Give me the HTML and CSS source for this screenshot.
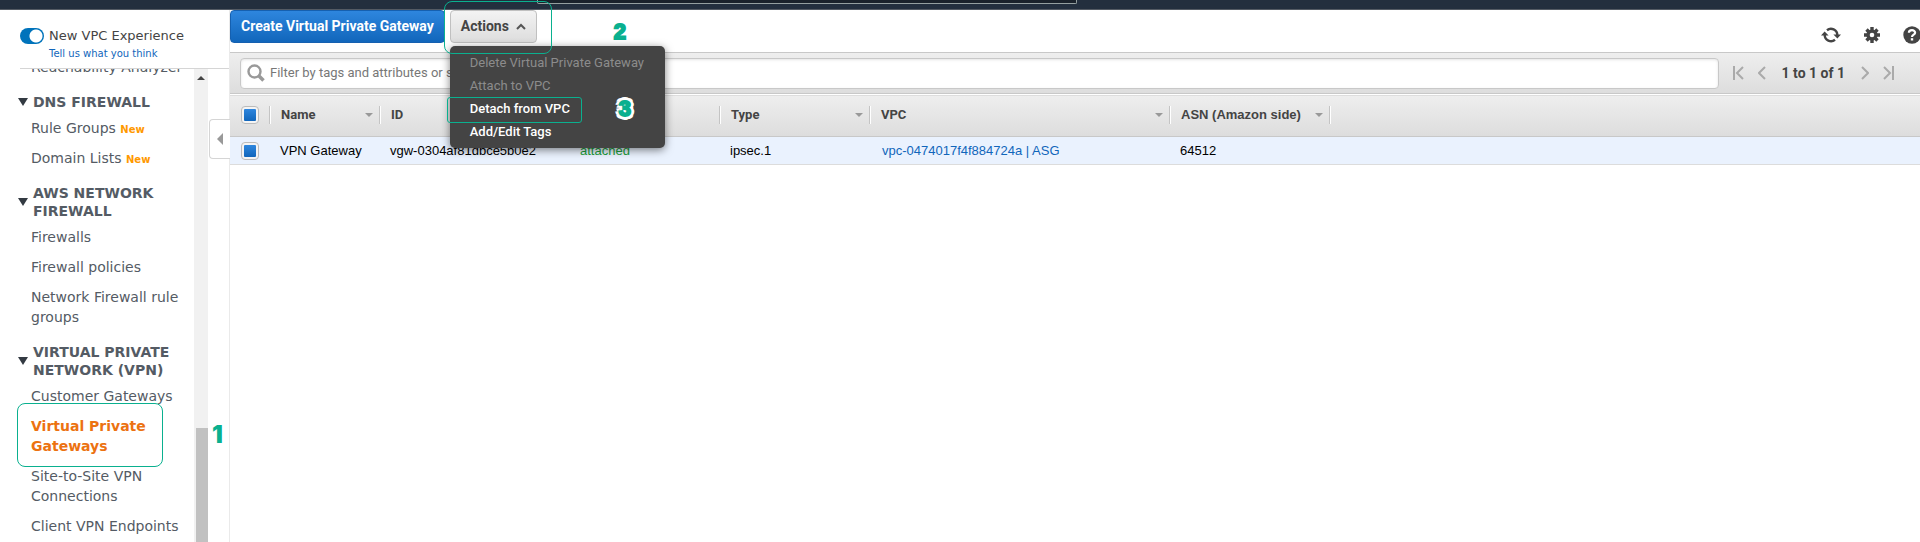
FILE: index.html
```html
<!DOCTYPE html>
<html lang="en">
<head>
<meta charset="utf-8">
<title>Virtual Private Gateways | VPC Console</title>
<link rel="stylesheet" href="styles.css">
</head>
<body>
<header class="topbar"><div class="topbar-search"></div></header>
<div class="layout">
  <aside class="sidebar">
    <div class="experience">
      <input class="switch" type="checkbox" id="exp" checked>
      <div class="experience-text">
        <label for="exp">New VPC Experience</label>
        <a href="#">Tell us what you think</a>
      </div>
    </div>
    <div class="nav-area">
      <nav class="nav">
        <ul class="nav-list">
          <li><a href="#">Reachability Analyzer</a></li>
        </ul>
        <h2 class="nav-heading"><span class="caret"></span>DNS FIREWALL</h2>
        <ul class="nav-list">
          <li><a href="#">Rule Groups <b class="new">New</b></a></li>
          <li><a href="#">Domain Lists <b class="new">New</b></a></li>
        </ul>
        <h2 class="nav-heading"><span class="caret"></span>AWS NETWORK FIREWALL</h2>
        <ul class="nav-list">
          <li><a href="#">Firewalls</a></li>
          <li><a href="#">Firewall policies</a></li>
          <li><a href="#">Network Firewall rule groups</a></li>
        </ul>
        <h2 class="nav-heading"><span class="caret"></span>VIRTUAL PRIVATE NETWORK (VPN)</h2>
        <ul class="nav-list">
          <li><a href="#">Customer Gateways</a></li>
          <li class="current"><a href="#">Virtual Private Gateways</a><span class="mark mark-nav"></span></li>
          <li><a href="#">Site-to-Site VPN Connections</a></li>
          <li><a href="#">Client VPN Endpoints</a></li>
        </ul>
      </nav>
      <div class="scrollbar"><span class="scroll-up"></span><span class="scroll-thumb"></span></div>
    </div>
    <button class="collapse" type="button" aria-label="Collapse sidebar"><span></span></button>
    <span class="step step-one">1</span>
  </aside>
  <main class="main">
    <div class="toolbar">
      <button class="btn btn-primary" type="button">Create Virtual Private Gateway</button>
      <div class="actions">
        <button class="btn btn-plain" type="button">Actions
          <svg width="10" height="7" viewBox="0 0 10 7"><path d="M1 6 5 2 9 6" fill="none" stroke="#555" stroke-width="2"/></svg>
        </button>
        <div class="menu">
          <button type="button" disabled>Delete Virtual Private Gateway</button>
          <button type="button" disabled>Attach to VPC</button>
          <button type="button">Detach from VPC</button>
          <button type="button">Add/Edit Tags</button>
          <span class="mark mark-item"></span>
          <span class="step step-three">3</span>
        </div>
        <span class="mark mark-actions"></span>
        <span class="step step-two">2</span>
      </div>
      <div class="tools">
        <button type="button" aria-label="Refresh"><svg width="20" height="16" viewBox="0 0 20 16"><g fill="none" stroke="#444" stroke-width="2.4"><path d="M6 3.2A6.3 6.3 0 0 1 16.3 8"/><path d="M14 12.8A6.3 6.3 0 0 1 3.700 8"/></g><path d="M12.400 7.500H20L16.400 11.500ZM0 8.500H7.600L3.600 4.500Z" fill="#444"/></svg></button>
        <button type="button" aria-label="Settings"><svg width="16" height="16" viewBox="0 0 16 16"><g stroke="#444" stroke-width="3.400"><path d="M8 0V16M0 8H16M2.500 2.500 13.500 13.500M13.500 2.500 2.500 13.500"/></g><circle cx="8" cy="8" r="5.600" fill="#444"/><circle cx="8" cy="8" r="2.300" fill="#fff"/></svg></button>
        <button type="button" aria-label="Help"><svg width="18" height="18" viewBox="0 0 18 18"><circle cx="9" cy="9" r="8.700" fill="#444"/><path d="M5.900 6.800C5.900 3.300 12.100 3.300 12.100 6.700 12.100 8.700 9 8.600 9 11" fill="none" stroke="#fff" stroke-width="2.200"/><path d="M7.800 12.200h2.400v2.300H7.800z" fill="#fff"/></svg></button>
      </div>
    </div>
    <div class="filterbar">
      <div class="search">
        <svg width="18" height="18" viewBox="0 0 18 18" fill="none" stroke="#999"><circle cx="7.500" cy="7.500" r="6" stroke-width="2.400"/><path d="M11.500 11.500 16.500 16.500" stroke-width="3.600"/></svg>
        <input type="text" aria-label="Filter" placeholder="Filter by tags and attributes or search by keyword">
      </div>
      <div class="pager">
        <button type="button" aria-label="First page"><svg width="11" height="14" viewBox="0 0 11 14"><path d="M1 0V14M10 1 4 7 10 13"/></svg></button>
        <button type="button" aria-label="Previous page"><svg width="8" height="14" viewBox="0 0 8 14"><path d="M7 1 1 7 7 13"/></svg></button>
        <span>1 to 1 of 1</span>
        <button type="button" aria-label="Next page"><svg width="8" height="14" viewBox="0 0 8 14"><path d="M1 1 7 7 1 13"/></svg></button>
        <button type="button" aria-label="Last page"><svg width="11" height="14" viewBox="0 0 11 14"><path d="M10 0V14M1 1 7 7 1 13"/></svg></button>
      </div>
    </div>
    <table class="grid">
      <colgroup><col class="w-check"><col class="w-name"><col class="w-id"><col class="w-mid"><col class="w-mid"><col class="w-vpc"><col class="w-asn"><col></colgroup>
      <thead>
        <tr>
          <th><div class="head"><input type="checkbox" class="tick" aria-label="Select all" checked></div></th>
          <th><div class="head">Name<i class="sort"></i></div></th>
          <th><div class="head">ID<i class="sort"></i></div></th>
          <th><div class="head">State</div></th>
          <th><div class="head">Type<i class="sort"></i></div></th>
          <th><div class="head">VPC<i class="sort"></i></div></th>
          <th><div class="head head-asn">ASN (Amazon side)<i class="sort"></i></div></th>
          <th></th>
        </tr>
      </thead>
      <tbody>
        <tr>
          <td><input type="checkbox" class="tick" aria-label="Select VPN Gateway" checked></td>
          <td>VPN Gateway</td>
          <td>vgw-0304af81dbce5b0e2</td>
          <td class="ok">attached</td>
          <td>ipsec.1</td>
          <td class="linked"><a href="#">vpc-0474017f4f884724a | ASG</a></td>
          <td>64512</td>
          <td></td>
        </tr>
      </tbody>
    </table>
  </main>
</div>
</body>
</html>
```
FILE: styles.css
```css
* { box-sizing: border-box; }
body {
  margin: 0;
  height: 100vh;
  display: flex;
  flex-direction: column;
  overflow: hidden;
  background: #fff;
  color: #444;
  font: 13px/20px Roboto, sans-serif;
}
a { text-decoration: none; }
button { border: 0; padding: 0; background: none; font: inherit; color: inherit; }
svg { display: block; }

.topbar {
  flex: none;
  height: 10px;
  padding: 0 843px 0 537px;
  background: #232f3e;
  border-bottom: 1px solid #545b64;
}
.topbar-search {
  height: 4px;
  background: #1a222b;
  border: 1px solid #95a0a0;
  border-top: 0;
  border-radius: 0 0 2px 2px;
}

.layout { flex: 1; min-height: 0; display: flex; }

/* Sidebar */
.sidebar {
  position: relative;
  flex: none;
  width: 230px;
  display: flex;
  flex-direction: column;
  border-right: 1px solid #eaeaea;
  font-family: "DejaVu Sans", sans-serif;
}
.experience {
  display: flex;
  gap: 5px;
  height: 59px;
  margin-left: 20px;
  padding-top: 16px;
  border-bottom: 1px solid #d5d5d5;
}
.experience-text { display: flex; flex-direction: column; }
.experience-text a { color: #1166bb; font-size: 10px; line-height: 16px; }
.switch {
  appearance: none;
  width: 24px;
  height: 16px;
  margin: 2px 0 0;
  border-radius: 8px;
  background: radial-gradient(circle at 16px 8px, #fff 6px, #0073bb 7px);
}
.nav-area { flex: 1; min-height: 0; display: flex; overflow: hidden; width: 208px; }
.nav { flex: 1; margin-top: -17px; color: #545b64; font-size: 14px; }
.nav-list { margin: 0; padding: 0 10px 0 31px; list-style: none; }
.nav-list li { position: relative; padding: 5px 0; }
.nav-list a { color: #545b64; }
.nav-list .current a { color: #ec7211; font-weight: bold; }
.new { color: #ff9900; font-size: 10px; line-height: 10px; }
.nav-heading {
  display: flex;
  align-items: center;
  gap: 5px;
  margin: 0;
  padding: 11px 8px 2px 18px;
  font-size: 14px;
  line-height: 18px;
}
.caret {
  flex: none;
  border: 5px solid transparent;
  border-top: 8px solid #333a42;
  border-bottom: 0;
}
.scrollbar {
  flex: none;
  width: 14px;
  display: flex;
  flex-direction: column;
  justify-content: space-between;
  background: #f1f1f1;
}
.scroll-up {
  align-self: center;
  margin-top: 7px;
  border: 4px solid transparent;
  border-bottom-color: #444;
  border-top: 0;
}
.scroll-thumb { height: 114px; margin-left: 2px; background: #c1c1c1; }
.collapse {
  position: absolute;
  top: 109px;
  right: -1px;
  width: 21px;
  height: 40px;
  display: flex;
  align-items: center;
  justify-content: center;
  background: #fff;
  border: 1px solid #d5d5d5;
  border-right: 0;
  border-radius: 4px 0 0 4px;
}
.collapse span { border: 6px solid transparent; border-right-color: #999; border-left: 0; }

/* Callouts */
.mark { position: absolute; border: 1px solid #0ab08f; border-radius: 8px; pointer-events: none; }
.mark-nav { left: -14px; top: -8px; width: 146px; height: 64px; }
.mark-actions { left: -6px; top: -9px; width: 108px; height: 53px; z-index: 3; }
.mark-item { left: -3px; top: 51px; width: 135px; height: 26px; border-radius: 3px; }
.step {
  position: absolute;
  color: #0ab08f;
  font: bold 22px/24px "Liberation Sans", sans-serif;
  -webkit-text-stroke: 2px #0ab08f;
}
.step-one {
  left: 212px;
  top: 413px;
  font: 900 24px/24px Inter, sans-serif;
  -webkit-text-stroke: 0;
}
.step-two { left: 164px; top: 10px; }
.step-three {
  left: 169px;
  top: 51px;
  text-shadow: 4px 0 #fff, -4px 0 #fff, 0 4px #fff, 0 -4px #fff,
    3px 3px #fff, -3px 3px #fff, 3px -3px #fff, -3px -3px #fff;
}

/* Main */
.main { flex: 1; min-width: 0; }
.toolbar {
  display: flex;
  align-items: flex-start;
  gap: 5px;
  height: 43px;
  border-bottom: 1px solid #c8c8c8;
}
.btn { height: 33px; border: 1px solid #c0c0c0; border-radius: 4px; font-size: 14px; line-height: 30px; font-weight: bold; }
.btn-primary {
  padding: 0 10px 1px;
  color: #fff;
  border-color: #1560b0;
  background: linear-gradient(#2e86de, #1166bb);
}
.btn-plain {
  display: flex;
  align-items: center;
  gap: 7px;
  padding: 0 10px 1px;
  background: linear-gradient(#f3f3f3, #dddddd);
}
.actions { position: relative; }
.menu {
  position: absolute;
  left: 0;
  top: 36px;
  z-index: 2;
  width: 215px;
  padding: 5px 0;
  display: flex;
  flex-direction: column;
  background: #444;
  border-radius: 5px;
  box-shadow: 0 2px 8px rgba(0, 0, 0, 0.5);
}
.menu button { padding: 0 20px; text-align: left; line-height: 23px; color: #fff; font-weight: 500; }
.menu button:disabled { color: #8c8c8c; font-weight: 400; }
.tools { display: flex; align-items: center; gap: 23px; margin: 16px -1px 0 auto; }

.filterbar {
  display: flex;
  align-items: center;
  height: 41px;
  padding: 0 26px 0 10px;
  background: linear-gradient(#eeeeee, #dddddd);
  border-bottom: 1px solid #c8c8c8;
}
.search {
  flex: 1;
  height: 31px;
  display: flex;
  align-items: center;
  gap: 5px;
  padding: 0 6px;
  background: #fff;
  border: 1px solid #c8c8c8;
  border-radius: 4px;
  box-shadow: inset 0 1px 3px #e4e4e4;
}
.search input { flex: 1; border: 0; padding: 0; outline: 0; background: none; font: inherit; }
.search input::placeholder { color: #777; }
.pager { display: flex; align-items: center; gap: 14px; margin-left: 14px; font-size: 14px; font-weight: bold; }
.pager span { margin: 0 2px; }
.pager svg { fill: none; stroke: #aaa; stroke-width: 2; }

.grid { width: 100%; border-collapse: collapse; table-layout: fixed; }
.w-check { width: 40px; }
.w-name { width: 110px; }
.w-id { width: 190px; }
.w-mid { width: 150px; }
.w-vpc { width: 300px; }
.w-asn { width: 160px; }
.grid thead tr {
  height: 42px;
  background: linear-gradient(#eeeeee, #dddddd);
  border-top: 1px solid #fff;
  border-bottom: 1px solid #c8c8c8;
}
.grid th { padding: 0 0 2px; text-align: left; }
.head {
  display: flex;
  align-items: center;
  justify-content: space-between;
  height: 18px;
  padding: 0 6px 0 11px;
  border-right: 1px solid #c4c4c4;
  box-shadow: 1px 0 #fff;
}
.head-asn { font-family: "Liberation Sans", sans-serif; }
.sort { border: 4px solid transparent; border-top-color: #999; border-bottom: 0; }
.grid tbody tr { height: 28px; background: #eaf2fe; border-bottom: 1px solid #dcdcdc; }
.grid td { padding: 0 10px; color: #000; white-space: nowrap; font-family: "Liberation Sans", sans-serif; }
.grid td:first-child { padding-left: 11px; }
.grid .linked { padding-left: 12px; }
.grid td a { color: #1166bb; }
.grid .ok { color: #1a9f3c; }
.tick {
  appearance: none;
  display: block;
  flex: none;
  width: 18px;
  height: 18px;
  margin: 0;
  border: 1px solid #bbb;
  border-radius: 4px;
  background: linear-gradient(#2e86de, #1166bb) content-box, #f4f4f4;
  padding: 2px;
}
```
